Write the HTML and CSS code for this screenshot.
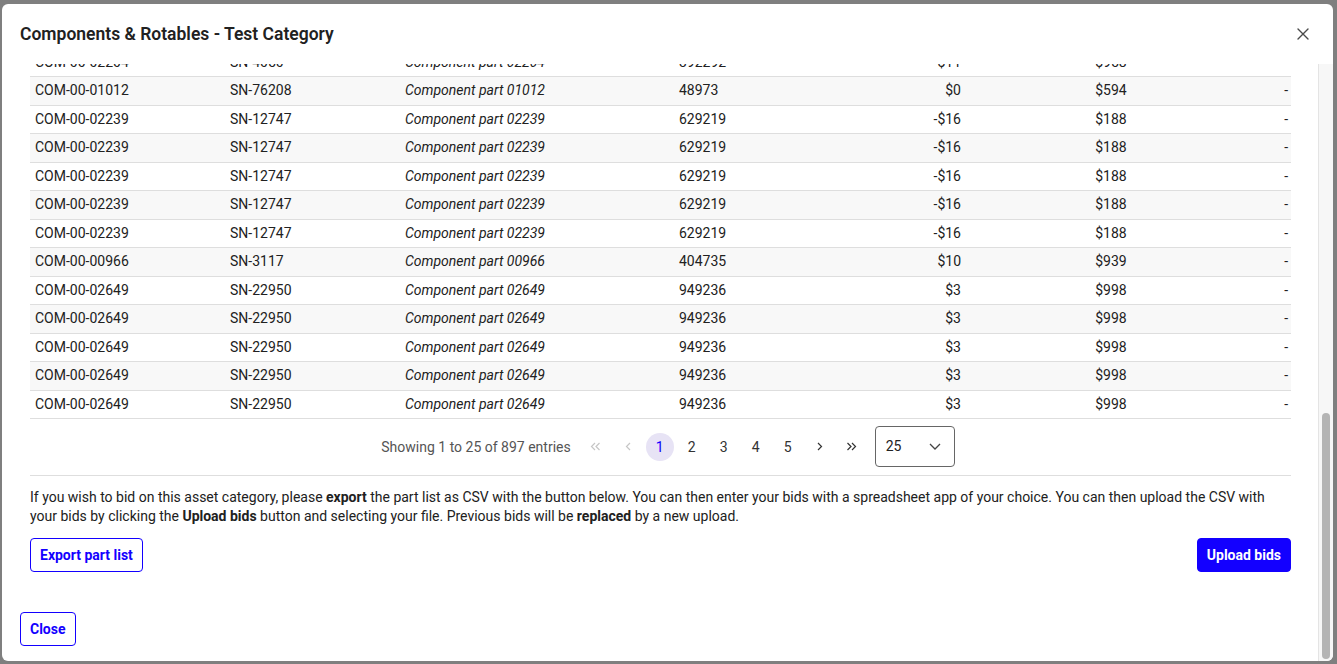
FILE: index.html
```html
<!DOCTYPE html>
<html lang="en">
<head>
<meta charset="utf-8">
<title>Components &amp; Rotables - Test Category</title>
<link rel="stylesheet" href="styles.css">
</head>
<body>
<div class="overlay">
  <div class="modal" role="dialog" aria-labelledby="modal-title">
    <header class="modal-header">
      <h2 class="modal-title" id="modal-title">Components &amp; Rotables - Test Category</h2>
      <button class="icon-btn" aria-label="Close">
        <svg width="12" height="12" viewBox="0 0 12 12"><path d="M1 1 L11 11 M11 1 L1 11" fill="none" stroke="#4a4a4a" stroke-width="1.4" stroke-linecap="round"/></svg>
      </button>
    </header>
    <div class="modal-body">
      <div class="scroll-area">
        <div class="body-inner">
          <div class="table-wrap">
            <table class="parts">
              <colgroup>
                <col class="c-pn"><col class="c-sn"><col class="c-desc"><col class="c-qty"><col class="c-min"><col class="c-est"><col class="c-bid">
              </colgroup>
              <thead>
                <tr><th>Part number</th><th>Serial number</th><th>Description</th><th>Reference</th><th class="num">Min. bid</th><th class="mid">Estimate</th><th class="num">Bid</th></tr>
              </thead>
              <tbody>
                <tr><td>COM-00-01874</td><td>SN-50321</td><td class="desc">Component part 01874</td><td>112034</td><td class="num">$5</td><td class="mid">$712</td><td class="num">-</td></tr>
                <tr><td>COM-00-00412</td><td>SN-8841</td><td class="desc">Component part 00412</td><td>275610</td><td class="num">-$2</td><td class="mid">$430</td><td class="num">-</td></tr>
                <tr><td>COM-00-00412</td><td>SN-8841</td><td class="desc">Component part 00412</td><td>275610</td><td class="num">-$2</td><td class="mid">$430</td><td class="num">-</td></tr>
                <tr><td>COM-00-01530</td><td>SN-64410</td><td class="desc">Component part 01530</td><td>830172</td><td class="num">$8</td><td class="mid">$265</td><td class="num">-</td></tr>
                <tr><td>COM-00-01530</td><td>SN-64410</td><td class="desc">Component part 01530</td><td>830172</td><td class="num">$8</td><td class="mid">$265</td><td class="num">-</td></tr>
                <tr><td>COM-00-02718</td><td>SN-19077</td><td class="desc">Component part 02718</td><td>507391</td><td class="num">$1</td><td class="mid">$847</td><td class="num">-</td></tr>
                <tr><td>COM-00-00089</td><td>SN-2265</td><td class="desc">Component part 00089</td><td>66148</td><td class="num">$14</td><td class="mid">$376</td><td class="num">-</td></tr>
                <tr><td>COM-00-00089</td><td>SN-2265</td><td class="desc">Component part 00089</td><td>66148</td><td class="num">$14</td><td class="mid">$376</td><td class="num">-</td></tr>
                <tr><td>COM-00-01345</td><td>SN-40981</td><td class="desc">Component part 01345</td><td>718305</td><td class="num">-$7</td><td class="mid">$521</td><td class="num">-</td></tr>
                <tr><td>COM-00-01345</td><td>SN-40981</td><td class="desc">Component part 01345</td><td>718305</td><td class="num">-$7</td><td class="mid">$521</td><td class="num">-</td></tr>
                <tr><td>COM-00-02204</td><td>SN-4050</td><td class="desc">Component part 02204</td><td>392292</td><td class="num">$11</td><td class="mid">$958</td><td class="num">-</td></tr>
                <tr><td>COM-00-02204</td><td>SN-4050</td><td class="desc">Component part 02204</td><td>392292</td><td class="num">$11</td><td class="mid">$958</td><td class="num">-</td></tr>
                <tr><td>COM-00-02204</td><td>SN-4050</td><td class="desc">Component part 02204</td><td>392292</td><td class="num">$11</td><td class="mid">$958</td><td class="num">-</td></tr>
                <tr><td>COM-00-01012</td><td>SN-76208</td><td class="desc">Component part 01012</td><td>48973</td><td class="num">$0</td><td class="mid">$594</td><td class="num">-</td></tr>
                <tr><td>COM-00-02239</td><td>SN-12747</td><td class="desc">Component part 02239</td><td>629219</td><td class="num">-$16</td><td class="mid">$188</td><td class="num">-</td></tr>
                <tr><td>COM-00-02239</td><td>SN-12747</td><td class="desc">Component part 02239</td><td>629219</td><td class="num">-$16</td><td class="mid">$188</td><td class="num">-</td></tr>
                <tr><td>COM-00-02239</td><td>SN-12747</td><td class="desc">Component part 02239</td><td>629219</td><td class="num">-$16</td><td class="mid">$188</td><td class="num">-</td></tr>
                <tr><td>COM-00-02239</td><td>SN-12747</td><td class="desc">Component part 02239</td><td>629219</td><td class="num">-$16</td><td class="mid">$188</td><td class="num">-</td></tr>
                <tr><td>COM-00-02239</td><td>SN-12747</td><td class="desc">Component part 02239</td><td>629219</td><td class="num">-$16</td><td class="mid">$188</td><td class="num">-</td></tr>
                <tr><td>COM-00-00966</td><td>SN-3117</td><td class="desc">Component part 00966</td><td>404735</td><td class="num">$10</td><td class="mid">$939</td><td class="num">-</td></tr>
                <tr><td>COM-00-02649</td><td>SN-22950</td><td class="desc">Component part 02649</td><td>949236</td><td class="num">$3</td><td class="mid">$998</td><td class="num">-</td></tr>
                <tr><td>COM-00-02649</td><td>SN-22950</td><td class="desc">Component part 02649</td><td>949236</td><td class="num">$3</td><td class="mid">$998</td><td class="num">-</td></tr>
                <tr><td>COM-00-02649</td><td>SN-22950</td><td class="desc">Component part 02649</td><td>949236</td><td class="num">$3</td><td class="mid">$998</td><td class="num">-</td></tr>
                <tr><td>COM-00-02649</td><td>SN-22950</td><td class="desc">Component part 02649</td><td>949236</td><td class="num">$3</td><td class="mid">$998</td><td class="num">-</td></tr>
                <tr><td>COM-00-02649</td><td>SN-22950</td><td class="desc">Component part 02649</td><td>949236</td><td class="num">$3</td><td class="mid">$998</td><td class="num">-</td></tr>
              </tbody>
            </table>
            <nav class="pager" aria-label="Pagination">
              <span class="pager-info">Showing 1 to 25 of 897 entries</span>
              <div class="pages">
                <button class="page disabled" aria-label="First page"><svg width="11" height="9" viewBox="0 0 11 9"><path d="M5 1 L1.5 4.5 L5 8 M9.5 1 L6 4.5 L9.5 8" fill="none" stroke="currentColor" stroke-width="1.2"/></svg></button>
                <button class="page disabled" aria-label="Previous page"><svg width="6" height="9" viewBox="0 0 6 9"><path d="M5 1 L1.5 4.5 L5 8" fill="none" stroke="currentColor" stroke-width="1.2"/></svg></button>
                <button class="page active">1</button>
                <button class="page">2</button>
                <button class="page">3</button>
                <button class="page">4</button>
                <button class="page">5</button>
                <button class="page" aria-label="Next page"><svg width="6" height="9" viewBox="0 0 6 9"><path d="M1 1 L4.5 4.5 L1 8" fill="none" stroke="currentColor" stroke-width="1.2"/></svg></button>
                <button class="page" aria-label="Last page"><svg width="11" height="9" viewBox="0 0 11 9"><path d="M1.5 1 L5 4.5 L1.5 8 M6 1 L9.5 4.5 L6 8" fill="none" stroke="currentColor" stroke-width="1.2"/></svg></button>
              </div>
              <div class="page-size">
                <span>25</span>
                <svg width="12" height="7" viewBox="0 0 12 7"><path d="M1 1 L6 6 L11 1" fill="none" stroke="#444" stroke-width="1.3"/></svg>
              </div>
            </nav>
            <div class="bid-info">
              <p class="bid-text">If you wish to bid on this asset category, please <strong>export</strong> the part list as CSV with the button below. You can then enter your bids with a spreadsheet app of your choice. You can then upload the CSV with your bids by clicking the <strong>Upload bids</strong> button and selecting your file. Previous bids will be <strong>replaced</strong> by a new upload.</p>
              <div class="bid-actions">
                <button class="btn btn-outline">Export part list</button>
                <button class="btn btn-primary">Upload bids</button>
              </div>
            </div>
          </div>
          <footer class="modal-footer">
            <button class="btn btn-outline">Close</button>
          </footer>
        </div>
      </div>
      <div class="scrollbar" aria-hidden="true"><div class="scroll-thumb"></div></div>
    </div>
  </div>
</div>
</body>
</html>
```

FILE: styles.css
```css
* { box-sizing: border-box; }
html, body { margin: 0; height: 100%; }
body {
  font-family: Roboto, "Liberation Sans", Arial, sans-serif;
  color: #212121;
  background: #7f7f7f;
  overflow: hidden;
}
.overlay {
  position: fixed;
  inset: 0;
  background: #7f7f7f;
  display: flex;
  padding: 4px 4px 3px 2px;
}
.modal {
  flex: 1;
  min-width: 0;
  background: #fff;
  border-radius: 6px;
  display: flex;
  flex-direction: column;
  overflow: hidden;
}
.modal-header {
  height: 60px;
  flex: none;
  display: flex;
  align-items: center;
  justify-content: space-between;
  padding: 0 18px;
}
.modal-title {
  margin: 0;
  font-size: 17.5px;
  font-weight: 600;
  color: #212121;
}
.icon-btn {
  border: 0;
  background: none;
  padding: 0;
  width: 24px;
  height: 24px;
  display: flex;
  align-items: center;
  justify-content: center;
}
.modal-body {
  flex: 1;
  min-height: 0;
  display: flex;
}
.scroll-area {
  flex: 1;
  min-width: 0;
  overflow: hidden;
  display: flex;
  flex-direction: column-reverse;
}
.scrollbar {
  flex: none;
  width: 15px;
  background: #f7f7f7;
  border-left: 1px solid #e4e4e4;
  display: flex;
  flex-direction: column;
  justify-content: flex-end;
  padding: 3px 3px 2px 3px;
}
.scroll-thumb {
  height: 246px;
  border-radius: 4px;
  background: #b4b4b4;
}
.body-inner {
  flex: none;
  padding: 0 17px 15px 18px;
}

.table-wrap { padding: 0 10px; }
.parts {
  width: 100%;
  border-collapse: collapse;
  table-layout: fixed;
  font-size: 14px;
}
.c-pn { width: 195px; }
.c-sn { width: 175px; }
.c-desc { width: 274px; }
.c-qty { width: 160px; }
.c-min { width: 132px; }
.c-est { width: 290px; }
.parts th {
  text-align: left;
  font-weight: 700;
  padding: 11px 5px;
  line-height: 17.5px;
  border-bottom: 1px solid #ccc;
}
.parts td {
  padding: 5px;
  line-height: 17.5px;
  border-bottom: 1px solid #dedede;
  white-space: nowrap;
}
.parts td:last-child { padding-right: 3px; }
.parts tbody tr:nth-child(even) td { background: #f8f8f8; }
.parts .desc { font-style: italic; }
.parts .num { text-align: right; }
.parts .mid { text-align: center; }

.pager {
  display: flex;
  align-items: center;
  justify-content: center;
  padding: 7px 0 8px 15px;
  border-bottom: 1px solid #dedede;
}
.pager-info { font-size: 14px; color: #555; margin-right: 11px; }
.pages { display: flex; gap: 4px; }
.page {
  width: 28px;
  height: 28px;
  padding: 0;
  border: 0;
  border-radius: 50%;
  background: none;
  font-family: inherit;
  font-size: 14px;
  color: #333;
  display: flex;
  align-items: center;
  justify-content: center;
}
.page.active { background: #e7e3f5; color: #1300ff; }
.page.disabled { color: #c6c6c6; }
.page-size {
  margin-left: 9px;
  width: 80px;
  height: 41px;
  border: 1px solid #666;
  border-radius: 4px;
  display: flex;
  align-items: center;
  justify-content: space-between;
  padding: 0 13px 2px 10px;
  font-size: 14px;
  color: #222;
}
.page-size svg { margin-top: 2px; }

.bid-info { padding-top: 12px; }
.bid-text { margin: 0; font-size: 14px; line-height: 19px; color: #212121; }
.bid-text strong { font-weight: 700; }
.bid-actions {
  margin-top: 12px;
  display: flex;
  justify-content: space-between;
}
.btn {
  font-family: inherit;
  font-size: 14px;
  font-weight: 700;
  line-height: 16px;
  padding: 8px 9px;
  border: 1px solid #1300ff;
  border-radius: 4px;
}
.btn-outline { background: #fff; color: #1300ff; }
.btn-primary { background: #1300ff; color: #fff; }
.modal-footer { padding-top: 40px; }
```
